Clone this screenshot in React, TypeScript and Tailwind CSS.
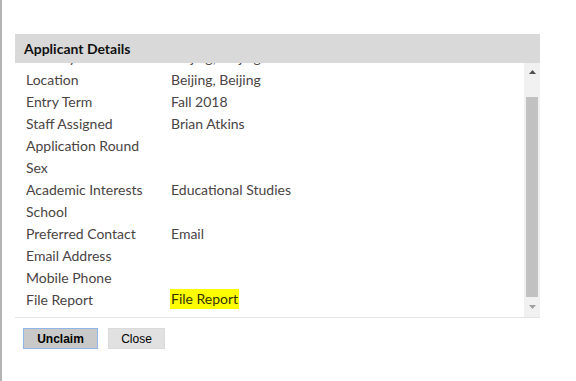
const rows: [string, string][] = [
  ['Country', 'Beijing, Beijing'],
  ['Location', 'Beijing, Beijing'],
  ['Entry Term', 'Fall 2018'],
  ['Staff Assigned', 'Brian Atkins'],
  ['Application Round', ''],
  ['Sex', ''],
  ['Academic Interests', 'Educational Studies'],
  ['School', ''],
  ['Preferred Contact', 'Email'],
  ['Email Address', ''],
  ['Mobile Phone', ''],
]

export default function App() {
  return (
    <div className="h-[381px] w-[576px] bg-white border-l-2 border-[#b4b4b4] pl-[13px] pt-[34px] font-['Lato',sans-serif]">
      <div className="w-[525px]">
        <div className="h-[29px] bg-[#d9d9d9] pl-[9px] flex items-center text-[14px] font-bold text-[#111]">
          Applicant Details
        </div>
        <div className="flex h-[255px] border-b border-[#e4e4e4]">
          <div className="flex-1 overflow-hidden">
            <div className="-mt-[17px] pl-[11px]">
              {rows.map(([label, value]) => (
                <div key={label} className="flex h-[22px] items-center text-[14px] text-[#4a4444]">
                  <div className="w-[145px]">{label}</div>
                  <div>{value}</div>
                </div>
              ))}
              <div className="flex h-[22px] items-center text-[14px] text-[#4a4444]">
                <div className="w-[145px]">File Report</div>
                <div className="bg-[#ffff00] text-[#333300] px-[1px] -ml-[1px] leading-[20px]">File Report</div>
              </div>
            </div>
          </div>
          <div className="w-[16px] bg-[#f1f1f1] flex flex-col items-center">
            <div className="h-[17px] flex items-center justify-center">
              <svg width="7" height="4" viewBox="0 0 7 4"><path d="M0 4 L3.5 0 L7 4Z" fill="#505050" /></svg>
            </div>
            <div className="h-[17px]" />
            <div className="w-[12px] flex-1 bg-[#c1c1c1]" />
            <div className="h-[20px] flex items-center justify-center">
              <svg width="7" height="4" viewBox="0 0 7 4"><path d="M0 0 L7 0 L3.5 4Z" fill="#a0a0a0" /></svg>
            </div>
          </div>
        </div>
        <div className="flex gap-[10px] pl-[8px] pt-[10px] font-['Liberation_Sans',Arial,sans-serif] text-[12px]">
          <button className="w-[75px] h-[21px] bg-[#c9c9c9] border border-[#90b4e6] font-bold text-black">Unclaim</button>
          <button className="w-[57px] h-[21px] bg-[#e1e1e1] border border-[#dadada] text-black">Close</button>
        </div>
      </div>
    </div>
  )
}
